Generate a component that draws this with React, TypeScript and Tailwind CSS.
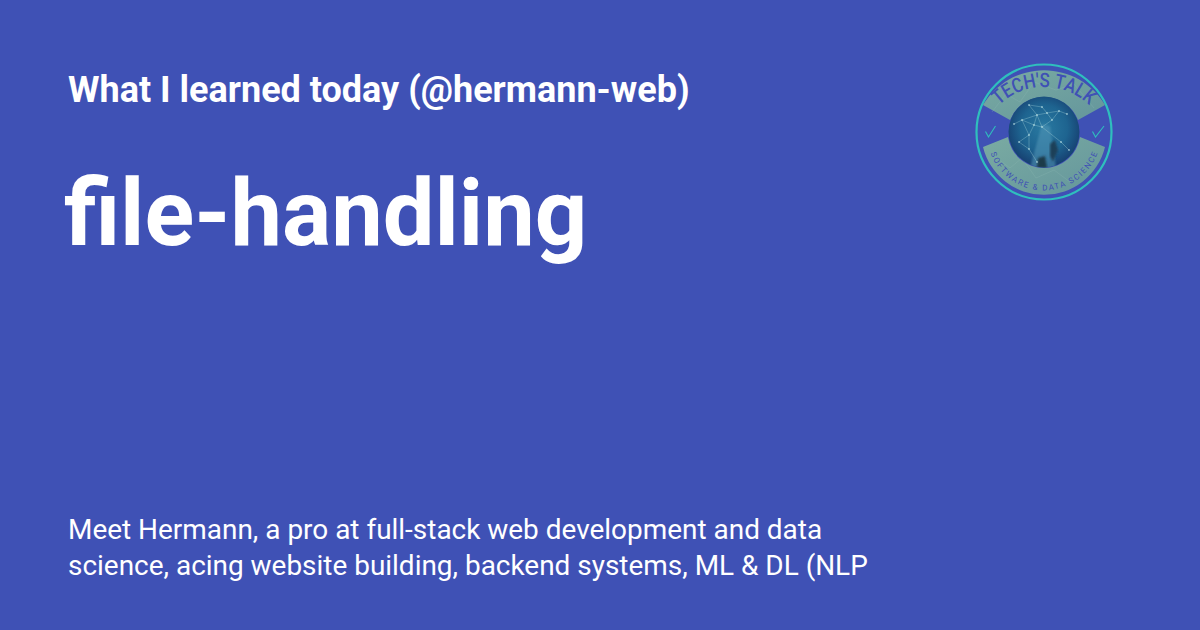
const nodes = [
  [-15, -27], [-7, -17], [3, -19], [15, -21], [23, -18], [-30, -8], [-22, -12], [-10, -7], [-2, -5],
  [-15, 3], [-25, 10], [-15, 17], [-7, 30], [17, 10], [25, 18], [-2, -25], [8, -12],
]

const links = [
  [0, 1], [1, 2], [2, 3], [3, 4], [5, 6], [6, 1], [6, 7], [7, 1], [7, 8], [1, 8], [8, 16], [16, 3], [2, 16],
  [7, 9], [9, 10], [9, 11], [10, 11], [11, 12], [8, 13], [13, 14], [0, 15], [15, 2], [6, 9],
]

// faint network printed over the two bands
const bandLines = [
  'M -52 -20 L -38 -38 L -24 -30 L -10 -50 L 12 -42 L 30 -48 L 50 -24',
  'M -50 24 L -34 36 L -22 26 L -8 46 L 10 38 L 26 50 L 44 30',
]

function Logo() {
  return (
    <svg viewBox="-70 -70 140 140" className="w-[140px] h-[140px] shrink-0">
      <defs>
        <radialGradient id="globe" cx="50%" cy="45%" r="55%">
          <stop offset="0%" stopColor="#2a7aa2" />
          <stop offset="60%" stopColor="#1e6490" />
          <stop offset="100%" stopColor="#163f70" />
        </radialGradient>
        <linearGradient id="band" x1="0" y1="0" x2="1" y2="1">
          <stop offset="0%" stopColor="#7aaba2" />
          <stop offset="100%" stopColor="#64969c" />
        </linearGradient>
        <filter id="soft">
          <feGaussianBlur stdDeviation="1.2" />
        </filter>
        <clipPath id="globeClip">
          <circle r="35.5" />
        </clipPath>
        <path id="topArc" d="M -60 -5 A 65 65 0 0 1 60 -5" />
        <path id="bottomArc" d="M -56 12 A 57 57 0 0 0 56 12" />
      </defs>
      <circle r="67.5" fill="none" stroke="#2fbfbd" strokeWidth="2.2" />
      <path d="M -61 -27 A 71 71 0 0 1 61 -27 L 34 -12 A 36.6 36.6 0 0 0 -34 -12 Z" fill="url(#band)" />
      <path d="M -61 15 A 62.8 62.8 0 0 0 61 15 L 36 5 A 36.4 36.4 0 0 1 -36 5 Z" fill="url(#band)" />
      {bandLines.map((d) => (
        <path key={d} d={d} fill="none" stroke="#8fbdb8" strokeWidth="0.5" opacity="0.5" />
      ))}
      <text className="fill-[#3f51b5] text-[20px] font-medium font-['Roboto',sans-serif]">
        <textPath href="#topArc" startOffset="50%" textAnchor="middle" textLength="100" lengthAdjust="spacingAndGlyphs">
          TECH'S TALK
        </textPath>
      </text>
      <text className="fill-[#3f51b5] text-[8px] font-['Roboto',sans-serif]">
        <textPath href="#bottomArc" startOffset="50%" textAnchor="middle" textLength="138">
          SOFTWARE &amp; DATA SCIENCE
        </textPath>
      </text>
      <circle r="35.5" fill="url(#globe)" />
      <g clipPath="url(#globeClip)">
        <path d="M -2 -8 L 6 -6 L 12 36 L -14 36 Z" fill="#4f93b4" filter="url(#soft)" opacity="0.6" />
        <path d="M -7 36 L -6 26 L 1 24 L 3 36 Z" fill="#1f3a4a" filter="url(#soft)" />
        <path d="M 6 12 L 11 8 L 14 18 L 9 30 L 6 24 Z" fill="#1f3f58" filter="url(#soft)" />
        {links.map(([a, b], i) => (
          <line key={i} x1={nodes[a][0]} y1={nodes[a][1]} x2={nodes[b][0]} y2={nodes[b][1]} stroke="#a4d4da" strokeWidth="0.35" />
        ))}
        {nodes.map(([x, y], i) => (
          <circle key={i} cx={x} cy={y} r="0.8" fill="#cdeeee" />
        ))}
      </g>
      <path d="M -58.5 -0.5 L -55.5 5 L -48.5 -6" fill="none" stroke="#2fbfbd" strokeWidth="1.1" />
      <path d="M 48.5 -0.5 L 51.5 5 L 60 -6" fill="none" stroke="#2fbfbd" strokeWidth="1.1" />
    </svg>
  )
}

export default function App() {
  return (
    <div className="w-[1200px] h-[630px] bg-[#3f51b5] text-white font-['Roboto',sans-serif] flex justify-between pl-[68px] pr-[86px] pt-[62px] pb-[46px] overflow-hidden">
      <div className="flex flex-col justify-between w-[820px]">
        <div>
          <h2 className="text-[36px] leading-[56px] font-bold whitespace-nowrap">
            What I learned today (@hermann-web)
          </h2>
          <h1 className="text-[92px] leading-[112px] font-bold mt-[40px] -ml-[4px]">file-handling</h1>
        </div>
        <p className="text-[27.95px] leading-[36px] whitespace-nowrap">
          Meet Hermann, a pro at full-stack web development and data
          <br />
          science, acing website building, backend systems, ML &amp; DL (NLP
        </p>
      </div>
      <Logo />
    </div>
  )
}
